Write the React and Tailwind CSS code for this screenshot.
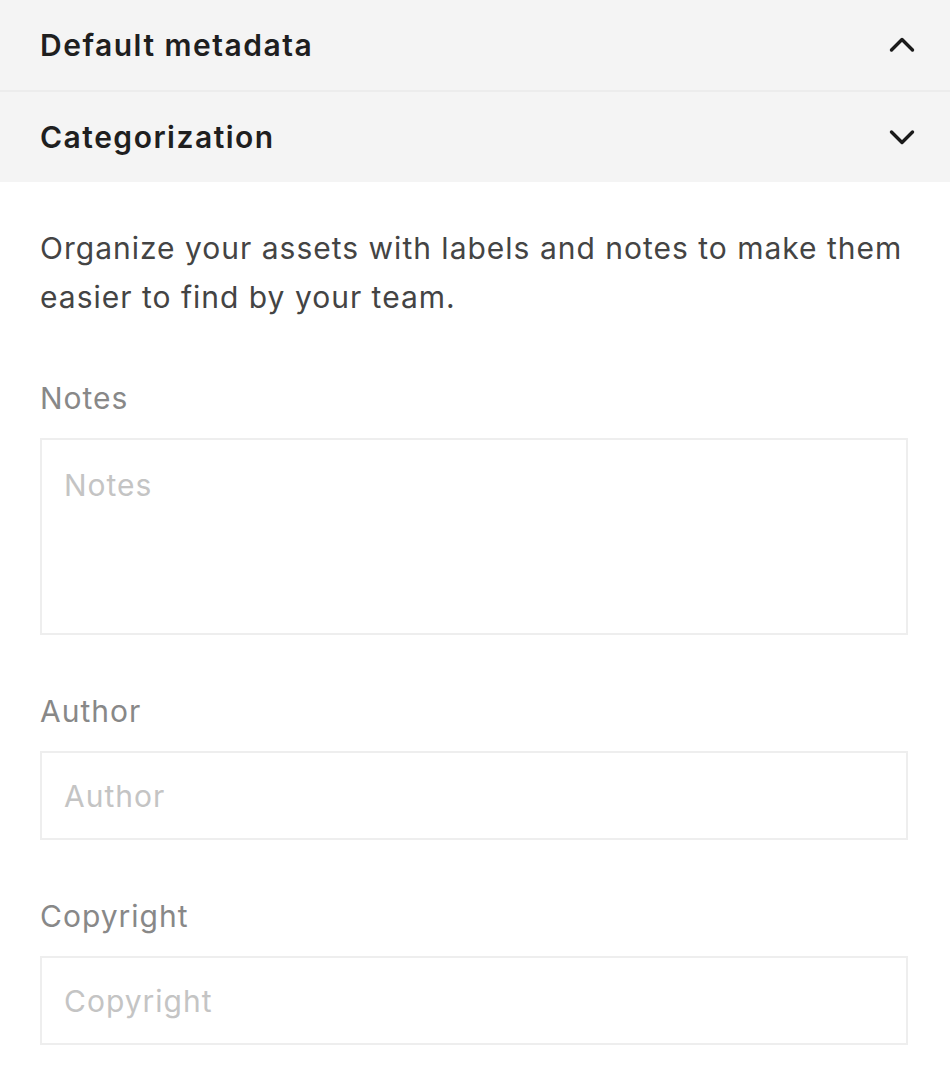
import React from 'react';

const Chevron = ({ up }) => (
  <svg width="30" height="30" viewBox="0 0 30 30" fill="none" className="shrink-0">
    <path
      d={up ? 'M4.5 20 L15 9.5 L25.5 20' : 'M4.5 10 L15 20.5 L25.5 10'}
      stroke="#1a1a1a"
      strokeWidth="3.4"
      strokeLinecap="round"
      strokeLinejoin="round"
    />
  </svg>
);

const Field = ({ label, multiline }) => (
  <div className="mt-[56px] flex flex-col gap-[20px]">
    <label className="text-[30px] leading-[40px] tracking-[1px] text-[#888888]">{label}</label>
    {multiline ? (
      <textarea
        placeholder={label}
        className="h-[197px] w-full resize-none border-2 border-[#eeeeee] px-[22px] pt-[25px] text-[30px] leading-[40px] tracking-[1px] text-[#333] placeholder:text-[#c4c4c4] outline-none"
      />
    ) : (
      <input
        placeholder={label}
        className="h-[89px] w-full border-2 border-[#eeeeee] px-[22px] text-[30px] leading-[40px] tracking-[1px] text-[#333] placeholder:text-[#c4c4c4] outline-none"
      />
    )}
  </div>
);

export default function App() {
  return (
    <div className="min-h-screen w-[950px] bg-white" style={{ fontFamily: 'Inter, "Noto Sans", sans-serif' }}>
      {/* Accordion headers */}
      <div className="flex h-[92px] items-center justify-between border-b-2 border-[#ececec] bg-[#f4f4f4] pl-[40px] pr-[33px]">
        <span className="text-[30px] font-semibold tracking-[1.5px] text-[#1f1f1f]">Default metadata</span>
        <Chevron up />
      </div>
      <div className="flex h-[90px] items-center justify-between bg-[#f4f4f4] pl-[40px] pr-[33px]">
        <span className="text-[30px] font-semibold tracking-[1.5px] text-[#1f1f1f]">Categorization</span>
        <Chevron />
      </div>

      {/* Body */}
      <div className="pl-[40px] pr-[42px] pt-[42px]">
        <p className="text-[30px] leading-[49px] tracking-[1px] text-[#444444]">
          Organize your assets with labels and notes to make them easier to find by your team.
        </p>
        <Field label="Notes" multiline />
        <Field label="Author" />
        <Field label="Copyright" />
      </div>
    </div>
  );
}
